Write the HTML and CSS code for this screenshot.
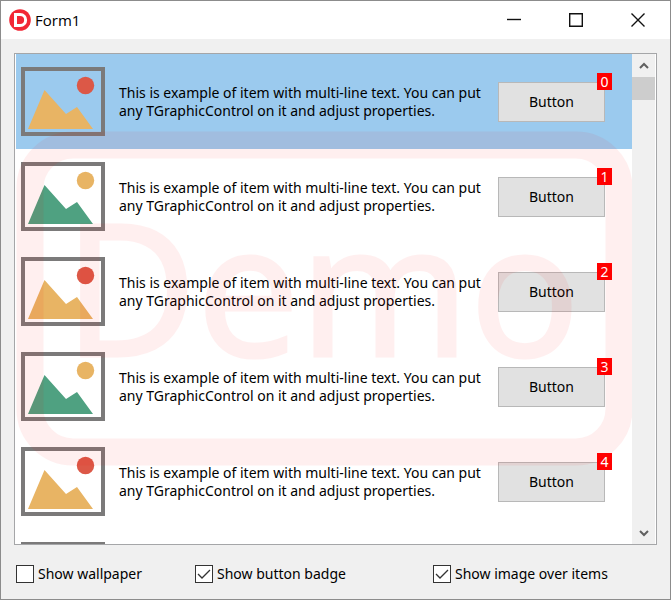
FILE: index.html
```
<!DOCTYPE html>
<html lang="en">
<head>
<meta charset="utf-8">
<meta name="viewport" content="width=device-width">
<title>Form1</title>
<link rel="stylesheet" href="styles.css">
</head>
<body>
<svg class="defs" aria-hidden="true">
  <symbol id="picture" viewBox="0 0 84 69">
    <rect x="2" y="2" width="80" height="65" fill="none" stroke="#7b7a7a" stroke-width="4"/>
    <path class="hill" d="M7 62 23.500 23 45 47 56 40 72 62z"/>
    <circle class="sun" cx="64.500" cy="18.500" r="8.700"/>
  </symbol>
</svg>
<div class="window">
<header class="titlebar">
  <svg class="logo" viewBox="0 0 22 22" aria-hidden="true">
    <circle cx="11" cy="11" r="10.800" fill="#f22735"/>
    <path d="M6.500 5.500h4.500c7.500 0 7.500 11 0 11H6.500z" fill="none" stroke="#fff" stroke-width="3"/>
  </svg>
  <h1>Form1</h1>
  <button type="button" class="sys" aria-label="Minimize"><svg viewBox="0 0 14 14"><path d="M0 6.500h14"/></svg></button>
  <button type="button" class="sys" aria-label="Maximize"><svg viewBox="0 0 14 14"><path d="M.7.700h12.600v12.600H.7z"/></svg></button>
  <button type="button" class="sys" aria-label="Close"><svg viewBox="0 0 14 14"><path d="M.5.500l13 13M13.500.500l-13 13"/></svg></button>
</header>

<main class="listbox">
  <ul class="items">
    <li class="item selected">
      <svg class="pic yellow"><use href="#picture"/></svg>
      <p>This is example of item with multi-line text. You can put any TGraphicControl on it and adjust properties.</p>
      <div class="action"><button type="button">Button</button><span class="badge">0</span></div>
    </li>
    <li class="item">
      <svg class="pic green"><use href="#picture"/></svg>
      <p>This is example of item with multi-line text. You can put any TGraphicControl on it and adjust properties.</p>
      <div class="action"><button type="button">Button</button><span class="badge">1</span></div>
    </li>
    <li class="item">
      <svg class="pic yellow"><use href="#picture"/></svg>
      <p>This is example of item with multi-line text. You can put any TGraphicControl on it and adjust properties.</p>
      <div class="action"><button type="button">Button</button><span class="badge">2</span></div>
    </li>
    <li class="item">
      <svg class="pic green"><use href="#picture"/></svg>
      <p>This is example of item with multi-line text. You can put any TGraphicControl on it and adjust properties.</p>
      <div class="action"><button type="button">Button</button><span class="badge">3</span></div>
    </li>
    <li class="item">
      <svg class="pic yellow"><use href="#picture"/></svg>
      <p>This is example of item with multi-line text. You can put any TGraphicControl on it and adjust properties.</p>
      <div class="action"><button type="button">Button</button><span class="badge">4</span></div>
    </li>
    <li class="item">
      <svg class="pic green"><use href="#picture"/></svg>
    </li>
  </ul>
  <!-- stamp drawn over the items -->
  <svg class="stamp" viewBox="0 0 616 490" aria-hidden="true">
    <rect x="14" y="91" width="589" height="307" rx="43" fill="none" stroke="#f00" stroke-width="27"/>
    <text x="48" y="302" fill="#f00" stroke="#f00" stroke-width="3">Demo</text>
  </svg>
  <div class="scrollbar">
    <button type="button" aria-label="Scroll up"><svg viewBox="0 0 10 8"><path d="M1 6l4-4 4 4"/></svg></button>
    <div class="track"><div class="thumb"></div></div>
    <button type="button" aria-label="Scroll down"><svg viewBox="0 0 10 8"><path d="M1 2l4 4 4-4"/></svg></button>
  </div>
</main>

<footer class="options">
  <label><input type="checkbox">Show wallpaper</label>
  <label><input type="checkbox" checked>Show button badge</label>
  <label><input type="checkbox" checked>Show image over items</label>
</footer>
</div>
</body>
</html>
```
FILE: styles.css
```
* { box-sizing: border-box; }
body {
  margin: 0;
  font: 14px/18px "Noto Sans", sans-serif;
  color: #000;
}
button {
  font: inherit;
  color: inherit;
  padding: 0;
}
.defs {
  position: absolute;
  width: 0;
  height: 0;
}
.window {
  display: flex;
  flex-direction: column;
  height: 100vh;
  background: #f0f0f0;
  border: 1px solid #8c8c8c;
}

/* title bar */
.titlebar {
  display: flex;
  align-items: center;
  height: 38px;
  padding: 0 1px 0 8px;
  background: #fff;
}
.logo {
  width: 22px;
  height: 22px;
}
.titlebar h1 {
  flex: 1;
  margin: 0 0 0 4px;
  font: 15px/22px "Open Sans", sans-serif;
}
.sys {
  display: flex;
  align-items: center;
  justify-content: center;
  width: 62px;
  height: 38px;
  border: 0;
  background: none;
}
.sys svg {
  width: 14px;
  height: 14px;
  fill: none;
  stroke: #111;
  stroke-width: 1.4;
}

/* list */
.listbox {
  position: relative;
  display: flex;
  flex: 1;
  min-height: 0;
  margin: 14px 13px 0;
  padding: 0 1px;
  border: 1px solid #a5a6a8;
  background: #fff;
  overflow: hidden;
}
.items {
  flex: 1;
  margin: 0;
  padding: 0;
  list-style: none;
}
.item {
  display: grid;
  grid-template-columns: 84px 1fr 107px;
  align-items: center;
  height: 95px;
  padding: 0 27px 0 5px;
}
.selected { background: #9bcaee; }
.pic {
  width: 84px;
  height: 69px;
}
.yellow {
  fill: #e8b464;
  color: #dc5847;
}
.green {
  fill: #4fa181;
  color: #e8b464;
}
.sun { fill: currentColor; }
.item p {
  margin: 0;
  padding-left: 14px;
}
.action { position: relative; }
.action button {
  display: block;
  width: 100%;
  height: 40px;
  border: 1px solid #b8b8b8;
  background: #e1e1e1;
}
.badge {
  position: absolute;
  top: -9px;
  right: -7px;
  width: 15px;
  line-height: 17px;
  text-align: center;
  color: #fff;
  background: #f00;
}
.stamp {
  position: absolute;
  top: 0;
  left: 1px;
  width: calc(100% - 25px);
  height: 100%;
  opacity: .06;
  pointer-events: none;
}
.stamp text { font: 182px "Noto Sans", sans-serif; }

/* scrollbar */
.scrollbar {
  display: flex;
  flex-direction: column;
  width: 23px;
  background: #f0f0f0;
}
.scrollbar button {
  display: flex;
  align-items: center;
  justify-content: center;
  height: 23px;
  border: 0;
  background: none;
}
.scrollbar svg {
  width: 10px;
  height: 8px;
  fill: none;
  stroke: #606060;
  stroke-width: 2;
}
.track { flex: 1; }
.thumb {
  height: 23px;
  background: #cdcdcd;
}

/* check boxes */
.options {
  display: grid;
  grid-template-columns: 179fr 238fr 224fr;
  align-items: center;
  height: 54px;
  padding: 4px 13px 0 15px;
}
.options label {
  display: flex;
  align-items: center;
  gap: 4px;
}
.options input {
  appearance: none;
  width: 18px;
  height: 18px;
  margin: 0;
  border: 1px solid #333;
  background: #fff;
}
.options input:checked {
  background: #fff url("data:image/svg+xml,%3Csvg xmlns='http://www.w3.org/2000/svg' viewBox='0 0 16 16'%3E%3Cpath d='M2 8l4 4 8-8' fill='none' stroke='%23333' stroke-width='1.300'/%3E%3C/svg%3E");
}
```
